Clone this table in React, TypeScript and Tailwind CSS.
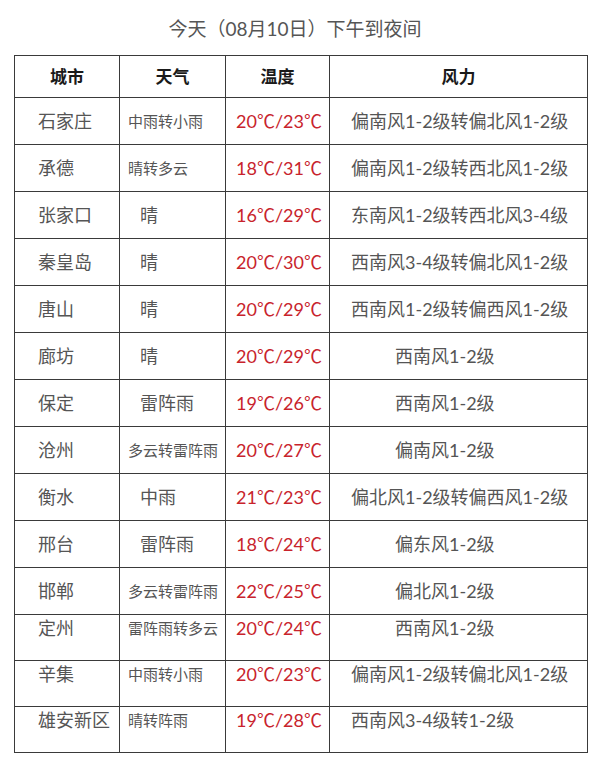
import React from 'react';

type Row = {
  city: string;
  weather: string;
  small: boolean;
  temp: string;
  wind: string;
  long: boolean;
};

const rows: Row[] = [
  { city: '石家庄', weather: '中雨转小雨', small: true, temp: '20℃/23℃', wind: '偏南风1-2级转偏北风1-2级', long: true },
  { city: '承德', weather: '晴转多云', small: true, temp: '18℃/31℃', wind: '偏南风1-2级转西北风1-2级', long: true },
  { city: '张家口', weather: '晴', small: false, temp: '16℃/29℃', wind: '东南风1-2级转西北风3-4级', long: true },
  { city: '秦皇岛', weather: '晴', small: false, temp: '20℃/30℃', wind: '西南风3-4级转偏北风1-2级', long: true },
  { city: '唐山', weather: '晴', small: false, temp: '20℃/29℃', wind: '西南风1-2级转偏西风1-2级', long: true },
  { city: '廊坊', weather: '晴', small: false, temp: '20℃/29℃', wind: '西南风1-2级', long: false },
  { city: '保定', weather: '雷阵雨', small: false, temp: '19℃/26℃', wind: '西南风1-2级', long: false },
  { city: '沧州', weather: '多云转雷阵雨', small: true, temp: '20℃/27℃', wind: '偏南风1-2级', long: false },
  { city: '衡水', weather: '中雨', small: false, temp: '21℃/23℃', wind: '偏北风1-2级转偏西风1-2级', long: true },
  { city: '邢台', weather: '雷阵雨', small: false, temp: '18℃/24℃', wind: '偏东风1-2级', long: false },
  { city: '邯郸', weather: '多云转雷阵雨', small: true, temp: '22℃/25℃', wind: '偏北风1-2级', long: false },
  { city: '定州', weather: '雷阵雨转多云', small: true, temp: '20℃/24℃', wind: '西南风1-2级', long: false },
  { city: '辛集', weather: '中雨转小雨', small: true, temp: '20℃/23℃', wind: '偏南风1-2级转偏北风1-2级', long: true },
  { city: '雄安新区', weather: '晴转阵雨', small: true, temp: '19℃/28℃', wind: '西南风3-4级转1-2级', long: true },
];

const font = "font-['Lato','Noto_Sans_CJK_SC',sans-serif]";

export default function App() {
  return (
    <div className={`w-[600px] h-[775px] bg-white ${font}`}>
      {/* title */}
      <div className="h-[55px] flex items-center justify-center pr-[10px] pt-[4px] text-[19px] text-[#555]">
        今天（08月10日）下午到夜间
      </div>

      <div className="ml-[14px] w-[574px] border-l border-t border-[#3a3a3a]">
        {/* header */}
        <div className="grid grid-cols-[105px_106px_104px_258px] h-[42px] text-[17px] font-bold text-[#1a1a1a]">
          <div className="flex items-center justify-center border-r border-b border-[#3a3a3a]">城市</div>
          <div className="flex items-center justify-center border-r border-b border-[#3a3a3a]">天气</div>
          <div className="flex items-center justify-center border-r border-b border-[#3a3a3a]">温度</div>
          <div className="flex items-center justify-center border-r border-b border-[#3a3a3a]">风力</div>
        </div>

        {rows.map((r, i) => {
          const tail = i >= 11;
          const cell = `flex border-r border-b border-[#3a3a3a] ${tail ? 'items-start pt-[1px] leading-[24px]' : 'items-center'}`;
          return (
            <div
              key={r.city}
              className={`grid grid-cols-[105px_106px_104px_258px] ${tail ? 'h-[46px]' : 'h-[47px]'} text-[#555]`}
            >
              <div className={`${cell} pl-[23px] text-[18px]`}>{r.city}</div>
              <div className={`${cell} whitespace-nowrap ${r.small ? 'pl-[8px] text-[15px]' : 'pl-[20px] text-[18px]'}`}>
                {r.weather}
              </div>
              <div className={`${cell} pl-[10px] text-[18px] text-[#c8232c] whitespace-nowrap`}>{r.temp}</div>
              <div className={`${cell} text-[18px] whitespace-nowrap ${r.long ? 'pl-[21px]' : 'pl-[65px]'}`}>
                {r.wind}
              </div>
            </div>
          );
        })}
      </div>
    </div>
  );
}
